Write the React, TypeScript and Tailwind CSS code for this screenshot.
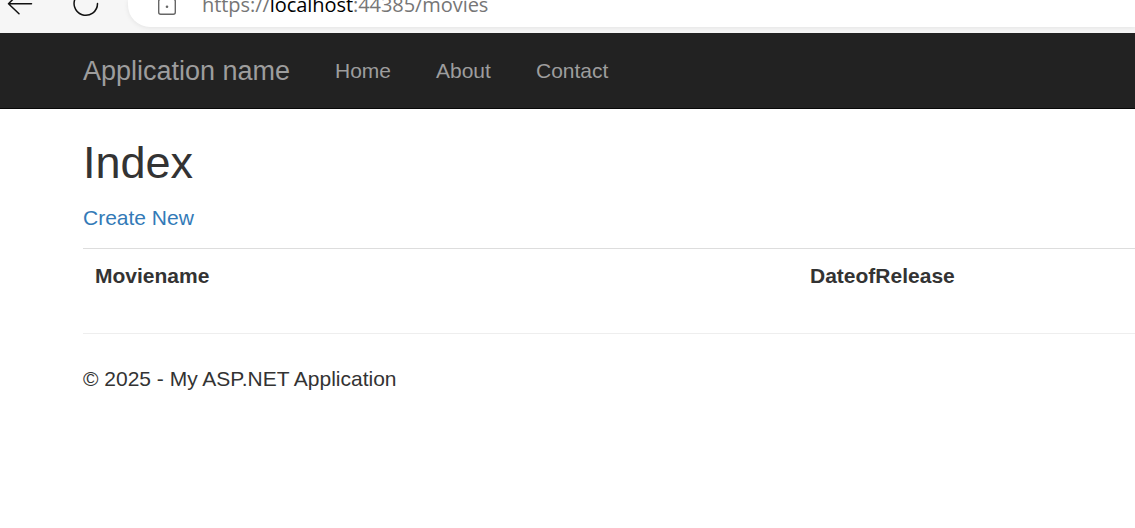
const nav = [
  { label: "Home", cls: "ml-[46px] w-[55px]" },
  { label: "About", cls: "ml-[46px] w-[55px]" },
  { label: "Contact", cls: "ml-[45px] w-[73px]" },
];

function BrowserBar() {
  return (
    <div className="flex h-[33px] overflow-hidden bg-[#f6f6f6]">
      <svg className="h-[33px] w-[128px] shrink-0" viewBox="0 0 128 33" fill="none" stroke="#111" strokeWidth="1.5" strokeLinecap="round" strokeLinejoin="round">
        <path d="M31.500 3.700H8.500M18.500 -6.300L8.500 3.700L19 13.700" />
        <path d="M97.500 3.500A11.700 11.700 0 1 1 76.500 -3.500" />
      </svg>
      <div className="flex h-[27px] flex-1 rounded-bl-[22px] bg-white shadow-[0_1px_5px_rgba(0,0,0,0.08)]">
        <svg className="ml-[28px] h-[27px] w-[24px] shrink-0" viewBox="0 0 24 27" fill="none" stroke="#666" strokeWidth="1.4">
          <rect x="2.700" y="-0.800" width="16.600" height="15.100" rx="2" />
          <circle cx="11" cy="6.700" r="1.300" fill="#666" stroke="none" />
        </svg>
        <div className="-mt-[11px] ml-[22px] h-8 whitespace-nowrap font-['Open_Sans',sans-serif] text-[20px] leading-8 tracking-[-0.06px] text-[#767676]">
          https://<span className="text-black">localhost</span>:44385/movies
        </div>
      </div>
    </div>
  );
}

export default function App() {
  return (
    <div className="h-[528px] overflow-hidden bg-white font-['Liberation_Sans',Arial,sans-serif] text-[21px] leading-[30px] text-[#333]">
      <BrowserBar />
      <nav className="flex h-[76px] items-center border-b border-[#080808] bg-[#222] pl-[83px] text-[#9d9d9d]">
        <a className="w-[206px] whitespace-nowrap text-[27px]">Application name</a>
        {nav.map((n) => (
          <a key={n.label} className={`whitespace-nowrap ${n.cls}`}>{n.label}</a>
        ))}
      </nav>
      <main className="pl-[83px]">
        <h2 className="pt-[29px] text-[45px] leading-[50px]">Index</h2>
        <p className="mt-[15px] text-[#337ab7]">Create New</p>
        <div className="mt-[15px] flex border-t border-[#ddd] pt-[12px] font-bold">
          <div className="w-[715px] pl-[12px]">Moviename</div>
          <div className="pl-[12px]">DateofRelease</div>
        </div>
        <hr className="mt-[42px] border-[#eee]" />
        <footer className="mt-[30px]">© 2025 - My ASP.NET Application</footer>
      </main>
    </div>
  );
}
